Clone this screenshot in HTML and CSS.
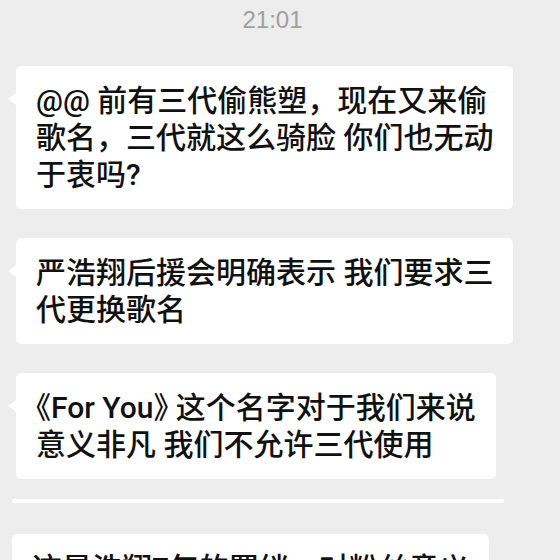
FILE: index.html
```html
<!DOCTYPE html>
<html lang="zh-CN">
<head>
    <meta charset="UTF-8">
    <meta name="viewport" content="width=device-width, initial-scale=1.0">
    <title>聊天记录</title>
    <link rel="stylesheet" href="styles.css">
</head>
<body>
<!-- Лента сообщений -->
<div class="chat">
    <div class="time">21:01</div>

    <div class="bubble">
        @@ 前有三代偷熊塑，现在又来偷<br>
        歌名，三代就这么骑脸 你们也无动<br>
        于衷吗?
    </div>

    <div class="bubble">
        严浩翔后援会明确表示 我们要求三<br>
        代更换歌名
    </div>

    <div class="bubble">
        <span class="title">《For You》</span> 这个名字对于我们来说<br>
        意义非凡 我们不允许三代使用
    </div>

    <div class="strip"></div>

    <div class="bubble bubble-shifted">
        这是浩翔7年的羁绊，对粉丝意义<br>
        非凡
    </div>
</div>
</body>
</html>
```

FILE: styles.css
```css
/* Общий стиль для страницы */
html, body {
    height: 100%;
    overflow: hidden;
}

body {
    margin: 0;
    background-color: #ededed;
    font-family: 'Liberation Sans', 'Noto Sans CJK SC', sans-serif;
}

/* Колонка сообщений */
.chat {
    display: flex;
    flex-direction: column;
    align-items: flex-start;
    gap: 29px;
    padding-top: 6px;
}

/* Время */
.time {
    align-self: stretch;
    text-align: center;
    padding-right: 15px;
    margin-bottom: 4px;
    font-size: 24px;
    line-height: 27px;
    color: #a0a0a0;
}

/* Пузырь сообщения */
.bubble {
    position: relative;
    margin-left: 16px;
    background-color: #fff;
    border-radius: 5px;
    padding: 16px 20px;
    font-family: Roboto, 'Noto Sans CJK SC', sans-serif;
    font-size: 30px;
    font-weight: 500;
    line-height: 37px;
    color: #111;
    white-space: nowrap;
}

.bubble::before {
    content: "";
    position: absolute;
    left: -8px;
    top: 27px;
    border-top: 6px solid transparent;
    border-bottom: 6px solid transparent;
    border-right: 8px solid #fff;
}

.bubble .title {
    font-feature-settings: "halt";
}

.bubble-shifted {
    margin-left: 12px;
    margin-top: 2px;
}

/* Полоска между сообщениями */
.strip {
    margin-left: 12px;
    margin-top: -9px;
    width: 492px;
    height: 4px;
    border-radius: 2px;
    background-color: #fff;
}
```
